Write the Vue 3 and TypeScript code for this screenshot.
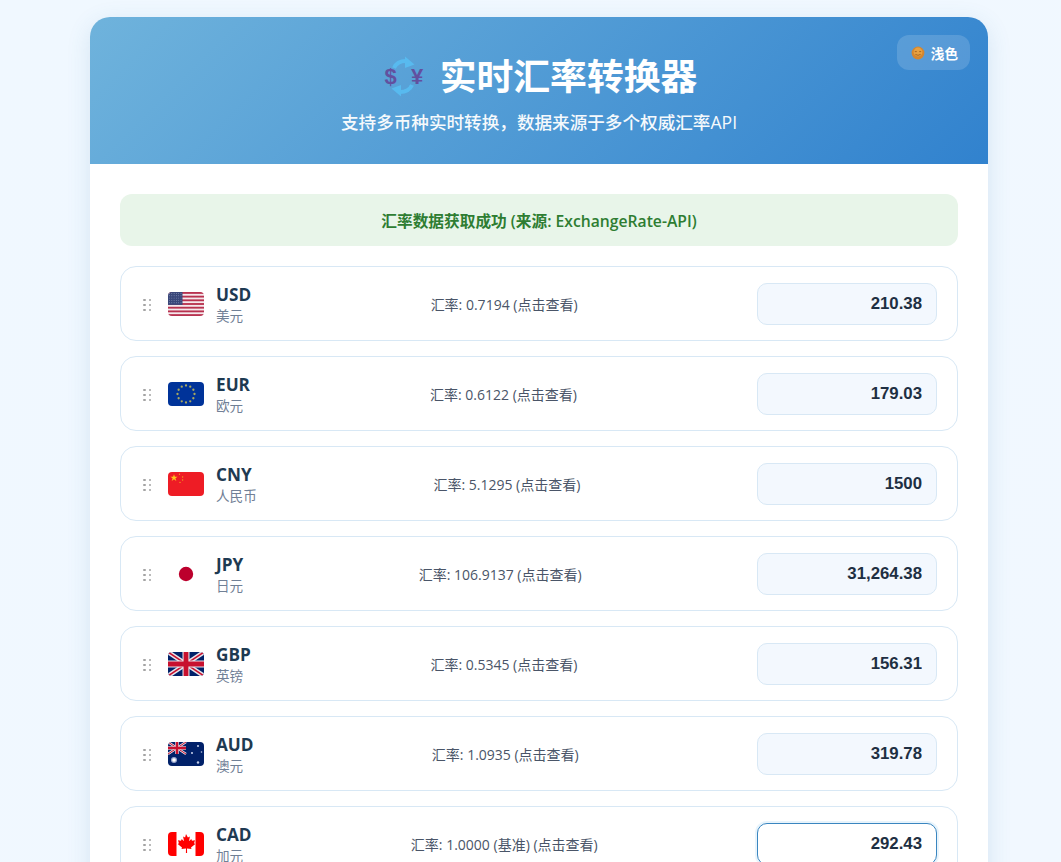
<script setup lang="ts">
interface Currency {
  code: string
  name: string
  rate: string
  value: string
  active?: boolean
}

const currencies: Currency[] = [
  { code: 'USD', name: '美元', rate: '汇率: 0.7194 (点击查看)', value: '210.38' },
  { code: 'EUR', name: '欧元', rate: '汇率: 0.6122 (点击查看)', value: '179.03' },
  { code: 'CNY', name: '人民币', rate: '汇率: 5.1295 (点击查看)', value: '1500' },
  { code: 'JPY', name: '日元', rate: '汇率: 106.9137 (点击查看)', value: '31,264.38' },
  { code: 'GBP', name: '英镑', rate: '汇率: 0.5345 (点击查看)', value: '156.31' },
  { code: 'AUD', name: '澳元', rate: '汇率: 1.0935 (点击查看)', value: '319.78' },
  { code: 'CAD', name: '加元', rate: '汇率: 1.0000 (基准) (点击查看)', value: '292.43', active: true },
]

const euStars = Array.from({ length: 12 }, (_, i) => {
  const a = (i * Math.PI) / 6
  return { x: 18 + 8.5 * Math.cos(a), y: 12 + 8.5 * Math.sin(a) }
})
const usStripes = [0, 1, 2, 3, 4, 5, 6]
const dots = [0, 1, 2, 3, 4, 5]
const cantonDots = Array.from({ length: 30 }, (_, i) => ({
  x: 1.5 + (i % 6) * 2.3,
  y: 1.5 + Math.floor(i / 6) * 2.3,
}))
</script>

<template>
  <div class="page">
    <div class="card">
      <header class="hero">
        <button class="theme-btn">
          <svg class="sun" width="14" height="14" viewBox="0 0 14 14">
            <circle cx="7" cy="7" r="6.4" fill="#d4862f" />
            <circle cx="7" cy="6" r="4.4" fill="#e8a040" />
            <path d="M4.4 8.4q2.600 1.800 5.200 0" stroke="#96581a" stroke-width=".8" fill="none" />
            <path d="M3.800 5.600h2M8.200 5.600h2" stroke="#96581a" stroke-width=".8" />
          </svg>
          <span>浅色</span>
        </button>
        <h1 class="title">
          <svg class="title-icon" width="40" height="40" viewBox="0 0 40 40">
            <path d="M11 12Q14 5 23 5" stroke="#58bdf2" stroke-width="4" fill="none" />
            <path d="M22 .5l9.500 8-9.500 3.500z" fill="#58bdf2" />
            <path d="M29 29Q26 36 17 36" stroke="#58bdf2" stroke-width="4" fill="none" />
            <path d="M18 40.500l-9.500-8 9.500-3.500z" fill="#58bdf2" />
            <text x="7.500" y="28" class="sym">$</text>
            <text x="34" y="28" class="sym">¥</text>
          </svg>
          <span>实时汇率转换器</span>
        </h1>
        <p class="subtitle">支持多币种实时转换，数据来源于多个权威汇率API</p>
      </header>

      <main class="content">
        <div class="status">汇率数据获取成功 (来源: ExchangeRate-API)</div>

        <div class="list">
          <div v-for="c in currencies" :key="c.code" class="row">
            <div class="left">
              <div class="drag">
                <i v-for="d in dots" :key="d"></i>
              </div>

              <svg class="flag" width="36" height="24" viewBox="0 0 36 24">
                <template v-if="c.code === 'USD'">
                  <rect width="36" height="24" fill="#f5e8ec" />
                  <rect v-for="s in usStripes" :key="s" :y="s * 3.69" width="36" height="1.850" fill="#b8324f" />
                  <rect width="14.500" height="12.900" fill="#39477a" />
                  <circle v-for="(p, i) in cantonDots" :key="i" :cx="p.x" :cy="p.y" r=".45" fill="#a9b2cf" />
                </template>
                <template v-else-if="c.code === 'EUR'">
                  <rect width="36" height="24" fill="#003399" />
                  <circle v-for="(s, i) in euStars" :key="i" :cx="s.x" :cy="s.y" r="1.150" fill="#a9a860" />
                </template>
                <template v-else-if="c.code === 'CNY'">
                  <rect width="36" height="24" fill="#ee1c25" />
                  <path d="M6 2.200l.9 2.500h2.700l-2.200 1.600.9 2.600-2.300-1.600-2.300 1.600.9-2.600-2.200-1.600h2.700z" fill="#ffc81e" />
                  <circle cx="11.500" cy="2.200" r=".7" fill="#f49a1e" />
                  <circle cx="14.600" cy="5" r=".7" fill="#f49a1e" />
                  <circle cx="14.600" cy="8" r=".7" fill="#f49a1e" />
                  <circle cx="12" cy="10.400" r=".7" fill="#f49a1e" />
                </template>
                <template v-else-if="c.code === 'JPY'">
                  <rect width="36" height="24" fill="#fff" />
                  <circle cx="18" cy="12" r="7.200" fill="#bc002d" />
                </template>
                <template v-else-if="c.code === 'GBP'">
                  <rect width="36" height="24" fill="#012169" />
                  <path d="M0 0l36 24M36 0L0 24" stroke="#e8e4ea" stroke-width="4.500" />
                  <path d="M0 0l36 24M36 0L0 24" stroke="#c8102e" stroke-width="1.500" />
                  <path d="M18 0v24M0 12h36" stroke="#e8e4ea" stroke-width="7" />
                  <path d="M18 0v24M0 12h36" stroke="#c8102e" stroke-width="4.800" />
                </template>
                <template v-else-if="c.code === 'AUD'">
                  <rect width="36" height="24" fill="#012169" />
                  <path d="M0 0l18 12M18 0L0 12" stroke="#e8e4ea" stroke-width="2.400" />
                  <path d="M0 0l18 12M18 0L0 12" stroke="#c8102e" stroke-width="1" />
                  <path d="M9 0v12M0 6h18" stroke="#e8e4ea" stroke-width="3.600" />
                  <path d="M9 0v12M0 6h18" stroke="#c8102e" stroke-width="2.400" />
                  <circle cx="6" cy="18" r="3" fill="#9aa8d0" />
                  <circle cx="6" cy="18" r="1.800" fill="#fff" />
                  <circle cx="30" cy="4" r="1.100" fill="#c0cbe6" />
                  <circle cx="24" cy="11" r="1.100" fill="#c0cbe6" />
                  <circle cx="33.500" cy="10" r=".8" fill="#c0cbe6" />
                  <circle cx="30" cy="20.500" r="1.200" fill="#c0cbe6" />
                </template>
                <template v-else>
                  <rect width="36" height="24" fill="#fff" />
                  <rect width="8.500" height="24" fill="#f00" />
                  <rect x="27.500" width="8.500" height="24" fill="#f00" />
                  <path d="M18 2l1.900 3.500 2-1-.9 4.800 2.300-2.300.7 1.700 3-.5-.9 3.100 1.200.6-4.300 3.600.5 1.500-4.500-.6.100 4.600h-1.200l.1-4.600-4.500.6.500-1.500-4.300-3.600 1.200-.6-.9-3.100 3 .5.700-1.700 2.300 2.300-.9-4.800 2 1z" fill="#f00" />
                </template>
              </svg>

              <div class="info">
                <div class="code">{{ c.code }}</div>
                <div class="name">{{ c.name }}</div>
              </div>
            </div>

            <div class="rate">{{ c.rate }}</div>

            <input class="amount" :class="{ active: c.active }" type="text" readonly :value="c.value" />
          </div>
        </div>
      </main>
    </div>
  </div>
</template>

<style scoped>
.page {
  padding: 17px 73px 40px 90px;
}

.card {
  background: #fff;
  border-radius: 20px;
  overflow: hidden;
  box-shadow: 0 6px 24px rgba(49, 110, 170, 0.14);
}

.hero {
  position: relative;
  height: 147px;
  box-sizing: border-box;
  padding-top: 33px;
  background: linear-gradient(135deg, #6fb3dc 0%, #3182ce 100%);
  color: #fff;
  text-align: center;
}

.theme-btn {
  position: absolute;
  top: 18px;
  right: 18px;
  display: flex;
  align-items: center;
  gap: 6px;
  height: 35px;
  padding: 0 12px 0 14px;
  border: none;
  border-radius: 12px;
  background: rgba(255, 255, 255, 0.15);
  color: #fff;
  font: 700 13.6px "Open Sans", "Noto Sans CJK SC", sans-serif;
}

.title {
  display: flex;
  justify-content: center;
  align-items: center;
  gap: 17px;
  margin: 0 0 0 2px;
  height: 52px;
  font: 700 36.8px/52px "Open Sans", "Noto Sans CJK SC", sans-serif;
}

.title-icon {
  overflow: visible;
  opacity: 0.9;
}

.sym {
  font: 700 22px "Liberation Sans", sans-serif;
  fill: #64489a;
  text-anchor: middle;
}

.subtitle {
  margin: 7px 0 0;
  font: 500 17.6px/26px "Open Sans", "Noto Sans CJK SC", sans-serif;
  opacity: 0.95;
}

.content {
  padding: 30px;
}

.status {
  height: 52px;
  border-radius: 12px;
  background: #e8f5e9;
  color: #2e7d32;
  font: 600 15.7px/54px "Open Sans", "Noto Sans CJK SC", sans-serif;
  text-align: center;
}

.list {
  display: flex;
  flex-direction: column;
  gap: 15px;
  margin-top: 20px;
}

.row {
  display: flex;
  justify-content: space-between;
  align-items: center;
  height: 75px;
  box-sizing: border-box;
  padding: 0 20px;
  border: 1px solid #d8e8f5;
  border-radius: 16px;
  background: #fff;
}

.left {
  display: flex;
  align-items: center;
}

.drag {
  display: grid;
  grid-template-columns: repeat(2, 2.5px);
  grid-auto-rows: 2.5px;
  gap: 2.500px 3px;
  margin: 0 17px 0 2px;
  padding-top: 3px;
}

.drag i {
  background: #a3a3a3;
  border-radius: 50%;
}

.flag {
  display: block;
  border-radius: 4px;
  margin-right: 12px;
}

.info {
  display: flex;
  flex-direction: column;
  padding-top: 2px;
}

.code {
  font: 700 17.2px/22px "Open Sans", sans-serif;
  color: #1e3a52;
}

.name {
  font: 400 13.6px/20px "Open Sans", "Noto Sans CJK SC", sans-serif;
  color: #718096;
}

.rate {
  padding-top: 2px;
  font: 400 14px/20px "Open Sans", "Noto Sans CJK SC", sans-serif;
  color: #4a5568;
}

.amount {
  width: 180px;
  height: 42px;
  box-sizing: border-box;
  padding: 0 14px;
  border: 1px solid #d8e8f5;
  border-radius: 10px;
  background: #f3f8fe;
  color: #1e2f42;
  font: 700 16.8px "Liberation Sans", sans-serif;
  text-align: right;
  outline: none;
}

.amount.active {
  background: #fff;
  border-color: #3a86c0;
  box-shadow: 0 0 0 2px rgba(99, 179, 237, 0.15);
}
</style>

<style>
html,
body {
  margin: 0;
  height: 100%;
  overflow: hidden;
  background: linear-gradient(135deg, #f0f8ff 0%, #f1f8ff 100%);
}
</style>
